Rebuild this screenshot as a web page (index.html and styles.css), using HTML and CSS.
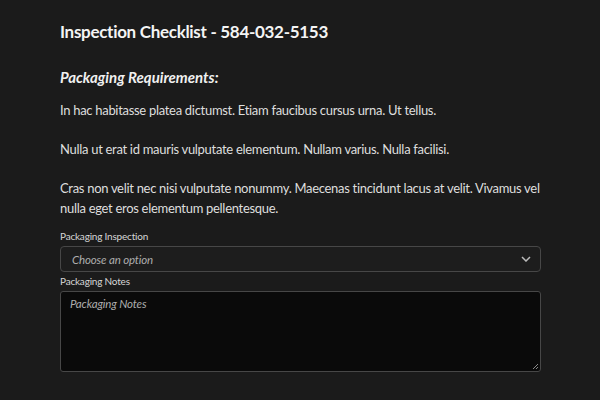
FILE: index.html
```html
<!DOCTYPE html>
<html>
<head>
<meta charset="utf-8">
<link rel="stylesheet" href="styles.css">
</head>
<body>
<main class="page">
  <h1 class="title">Inspection Checklist - 584-032-5153</h1>
  <h2 class="section">Packaging Requirements:</h2>
  <p class="para">In hac habitasse platea dictumst. Etiam faucibus cursus urna. Ut tellus.</p>
  <p class="para">Nulla ut erat id mauris vulputate elementum. Nullam varius. Nulla facilisi.</p>
  <p class="para last">Cras non velit nec nisi vulputate nonummy. Maecenas tincidunt lacus at velit. Vivamus vel nulla eget eros elementum pellentesque.</p>
  <div class="field">
    <label class="label">Packaging Inspection</label>
    <div class="select">
      <span class="placeholder">Choose an option</span>
      <svg class="chev" width="10" height="6" viewBox="0 0 10 6"><path d="M1 1 L5 5 L9 1" fill="none" stroke="#bbb" stroke-width="1.5"/></svg>
    </div>
  </div>
  <div class="field">
    <label class="label">Packaging Notes</label>
    <div class="textarea">
      <span class="placeholder">Packaging Notes</span>
      <svg class="grip" width="7" height="7" viewBox="0 0 7 7"><path d="M6 1 L1 6 M6 4 L4 6" stroke="#888" stroke-width="1"/></svg>
    </div>
  </div>
</main>
</body>
</html>
```
FILE: styles.css
```css
html, body { margin: 0; padding: 0; }
body {
  background: #1b1b1b;
  color: #e6e6e6;
  font-family: Lato, "Open Sans", sans-serif;
  width: 600px;
  height: 400px;
  overflow: hidden;
}
.page {
  padding: 20px 59px 0 60px;
}
.title {
  margin: 0;
  font-size: 17px;
  letter-spacing: -0.3px;
  font-weight: 700;
  line-height: 24px;
  color: #f4f4f4;
}
.section {
  margin: 21px 0 11px;
  font-size: 15px;
  font-weight: 700;
  font-style: italic;
  line-height: 24px;
  color: #f0f0f0;
}
.para {
  margin: 0 0 19px;
  font-size: 13px;
  letter-spacing: -0.3px;
  line-height: 20px;
  color: #dedede;
}
.para.last { margin-bottom: 11px; }
.field { display: flex; flex-direction: column; }
.label {
  font-size: 10px;
  letter-spacing: -0.2px;
  line-height: 14px;
  color: #d6d6d6;
  margin-bottom: 3px;
}
.select {
  box-sizing: border-box;
  height: 26px;
  border: 1px solid #474747;
  border-radius: 4px;
  background: #1d1d1d;
  display: flex;
  align-items: center;
  justify-content: space-between;
  padding: 0 9px 0 11px;
  margin-bottom: 2px;
}
.placeholder {
  font-size: 11.5px;
  letter-spacing: -0.15px;
  font-style: italic;
  color: #adadad;
}
.textarea {
  box-sizing: border-box;
  position: relative;
  height: 81px;
  border: 1px solid #474747;
  border-radius: 3px;
  background: #0a0a0a;
  padding: 4px 9px;
  font-size: 11.5px;
  line-height: 16px;
}
.grip { position: absolute; right: 1px; bottom: 1px; }
```
